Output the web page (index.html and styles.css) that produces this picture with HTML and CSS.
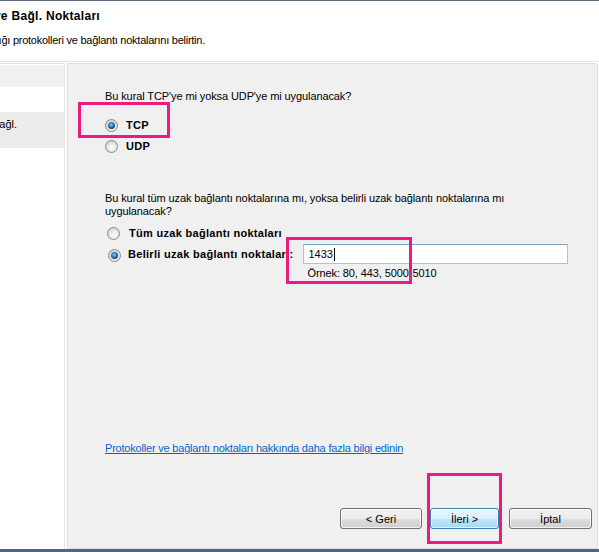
FILE: index.html
```html
<!DOCTYPE html>
<html lang="tr">
  <head>
    <meta charset="UTF-8" />
    <meta name="viewport" content="width=device-width, initial-scale=1.0" />
    <title>Yeni Gelen Kural Sihirbazı</title>
    <link rel="stylesheet" href="styles.css">
  </head>
  <body>
    <div class="window">
      <header class="head">
        <div class="head-line title-line">
          <h1 class="title">Protokol ve Bağl. Noktaları</h1>
        </div>
        <div class="head-line subtitle-line">
          <p class="subtitle">Bu kuralın uygulandığı protokolleri ve bağlantı noktalarını belirtin.</p>
        </div>
      </header>

      <div class="body">
        <nav class="steps">
          <div class="steps-head"></div>
          <div class="step step-current"><span>Protokol ve Bağl.</span></div>
        </nav>

        <main class="page">
          <p class="question q-proto">Bu kural TCP'ye mi yoksa UDP'ye mi uygulanacak?</p>
          <div class="options">
            <label class="option"><span class="radio is-on"></span><span class="option-text">TCP</span></label>
            <label class="option"><span class="radio"></span><span class="option-text">UDP</span></label>
          </div>

          <p class="question q-ports">Bu kural tüm uzak bağlantı noktalarına mı, yoksa belirli uzak bağlantı noktalarına mı uygulanacak?</p>
          <div class="options options-ports">
            <label class="option"><span class="radio"></span><span class="option-text">Tüm uzak bağlantı noktaları</span></label>
            <div class="option option-field">
              <span class="radio is-on"></span>
              <span class="option-text">Belirli uzak bağlantı noktaları:</span>
              <div class="field">
                <div class="input">1433<span class="caret"></span></div>
                <div class="hint">Örnek: 80, 443, 5000-5010</div>
              </div>
            </div>
          </div>

          <a class="help-link" href="#">Protokoller ve bağlantı noktaları hakkında daha fazla bilgi edinin</a>

          <div class="buttons">
            <button class="btn">&lt; Geri</button>
            <button class="btn btn-default">İleri &gt;</button>
            <button class="btn btn-cancel">İptal</button>
          </div>
        </main>
      </div>

      <!-- highlight marks drawn over the dialog -->
      <div class="mark mark-proto"></div>
      <div class="mark mark-ports"></div>
      <div class="mark mark-next"></div>
    </div>
  </body>
</html>
```

FILE: styles.css
```css
* {
  box-sizing: border-box;
}

body {
  margin: 0;
  font-family: "Liberation Sans", Arial, sans-serif;
  font-size: 11px;
  color: #000000;
  background: #ffffff;
}

.window {
  position: relative;
  width: 599px;
  height: 552px;
  display: flex;
  flex-direction: column;
  overflow: hidden;
  border-top: 1px solid #5a6a7c;
  border-bottom: 3px solid #56667a;
}

/* header */

.head {
  height: 61px;
  flex: none;
  padding-top: 8px;
  border-bottom: 1px solid #e4e4e4;
}

.head-line {
  display: flex;
  justify-content: flex-end;
  white-space: nowrap;
}

.title-line {
  width: 100px;
}

.subtitle-line {
  width: 205px;
  margin-top: 10px;
}

.title {
  margin: 0;
  font-size: 12px;
  line-height: 15px;
  font-weight: bold;
  letter-spacing: 0.3px;
}

.subtitle {
  margin: 0;
  line-height: 13px;
  letter-spacing: -0.25px;
}

/* body */

.body {
  flex: 1;
  display: flex;
  padding-top: 1px;
}

.steps {
  width: 65px;
  flex: none;
  border-top: 1px solid #e4e4e4;
  border-right: 1px solid #e4e4e4;
  background: #ffffff;
}

.steps-head {
  height: 22px;
  margin-top: 1px;
  background: #f0f0f0;
}

.step {
  display: flex;
  justify-content: flex-end;
  white-space: nowrap;
  line-height: 13px;
}

.step-current {
  height: 36px;
  margin-top: 25px;
  padding: 6px 47px 0 0;
  background: #ececec;
}

.page {
  flex: 1;
  margin: 0 1px 1px 2px;
  padding: 0 5px 19px 37px;
  background: #f0f0f0;
  border: 1px solid #dcdcdc;
  border-radius: 0 3px 0 0;
  letter-spacing: -0.1px;
}

.question {
  margin: 0;
  line-height: 13px;
}

.q-proto {
  margin-top: 26px;
}

.q-ports {
  max-width: 400px;
  margin-top: 38px;
}

.options {
  display: flex;
  flex-direction: column;
  gap: 5px;
  margin-top: 14px;
}

.option {
  display: flex;
  align-items: center;
  height: 16px;
}

.option-text {
  margin-left: 8px;
  font-weight: bold;
  letter-spacing: 0.3px;
}

.options-ports {
  gap: 3px;
  margin-top: 7px;
  padding-left: 2px;
}

.options-ports .option-text {
  margin-left: 9px;
}

.option-field {
  align-items: flex-start;
  height: auto;
}

.option-field .radio {
  margin-top: 5px;
  margin-left: 1px;
}

.option-field .option-text {
  margin-left: 7px;
  line-height: 20px;
}

.field {
  margin-left: 10px;
}

.radio {
  position: relative;
  width: 13px;
  height: 13px;
  flex: none;
  border-radius: 50%;
  border: 1px solid #8a8a8a;
  background: radial-gradient(circle at 55% 60%, #fbfbfb 0, #eeeeee 35%, #cacaca 85%);
}

.radio.is-on::after {
  content: "";
  position: absolute;
  left: 2px;
  top: 2px;
  width: 7px;
  height: 7px;
  border-radius: 50%;
  background: radial-gradient(circle at 45% 40%, #8fd0f6 0, #2a7cc0 40%, #143f63 75%, #0b2a45 100%);
}

.input {
  width: 265px;
  height: 20px;
  padding: 3px 0 0 4px;
  line-height: 13px;
  letter-spacing: 0;
  background: #ffffff;
  border: 1px solid #a9c3dd;
  border-top-color: #7fa3c9;
}

.caret {
  display: inline-block;
  width: 1px;
  height: 13px;
  margin-left: 1px;
  vertical-align: top;
  background: #000000;
}

.hint {
  margin-top: 3px;
  padding-left: 4px;
  line-height: 13px;
}

.help-link {
  display: block;
  width: max-content;
  margin-top: 162px;
  line-height: 13px;
  color: #0066cc;
  text-decoration: underline;
  letter-spacing: -0.2px;
}

/* wizard buttons */

.buttons {
  display: flex;
  justify-content: flex-end;
  margin-top: 53px;
}

.btn {
  height: 21px;
  width: 82px;
  margin: 0;
  padding: 0;
  font-family: inherit;
  font-size: 11px;
  color: #000000;
  border: 1px solid #707070;
  border-radius: 3px;
  background: linear-gradient(#f2f2f2 0%, #ebebeb 50%, #dddddd 51%, #cfcfcf 100%);
  box-shadow: inset 0 0 0 1px rgba(255, 255, 255, 0.7);
}

.btn-default {
  width: 69px;
  margin-left: 8px;
  border-color: #3c7fb1;
  background: linear-gradient(#eaf6fd 0%, #d9f0fc 50%, #bee6fd 51%, #a7d9f5 100%);
}

.btn-cancel {
  width: 83px;
  margin-left: 10px;
}

/* highlight marks */

.mark {
  position: absolute;
  border: 3px solid #ee1a7d;
}

.mark-proto {
  left: 78px;
  top: 101px;
  width: 92px;
  height: 36px;
}

.mark-ports {
  left: 286px;
  top: 236px;
  width: 126px;
  height: 47px;
}

.mark-next {
  left: 427px;
  top: 472px;
  width: 75px;
  height: 71px;
}
```
